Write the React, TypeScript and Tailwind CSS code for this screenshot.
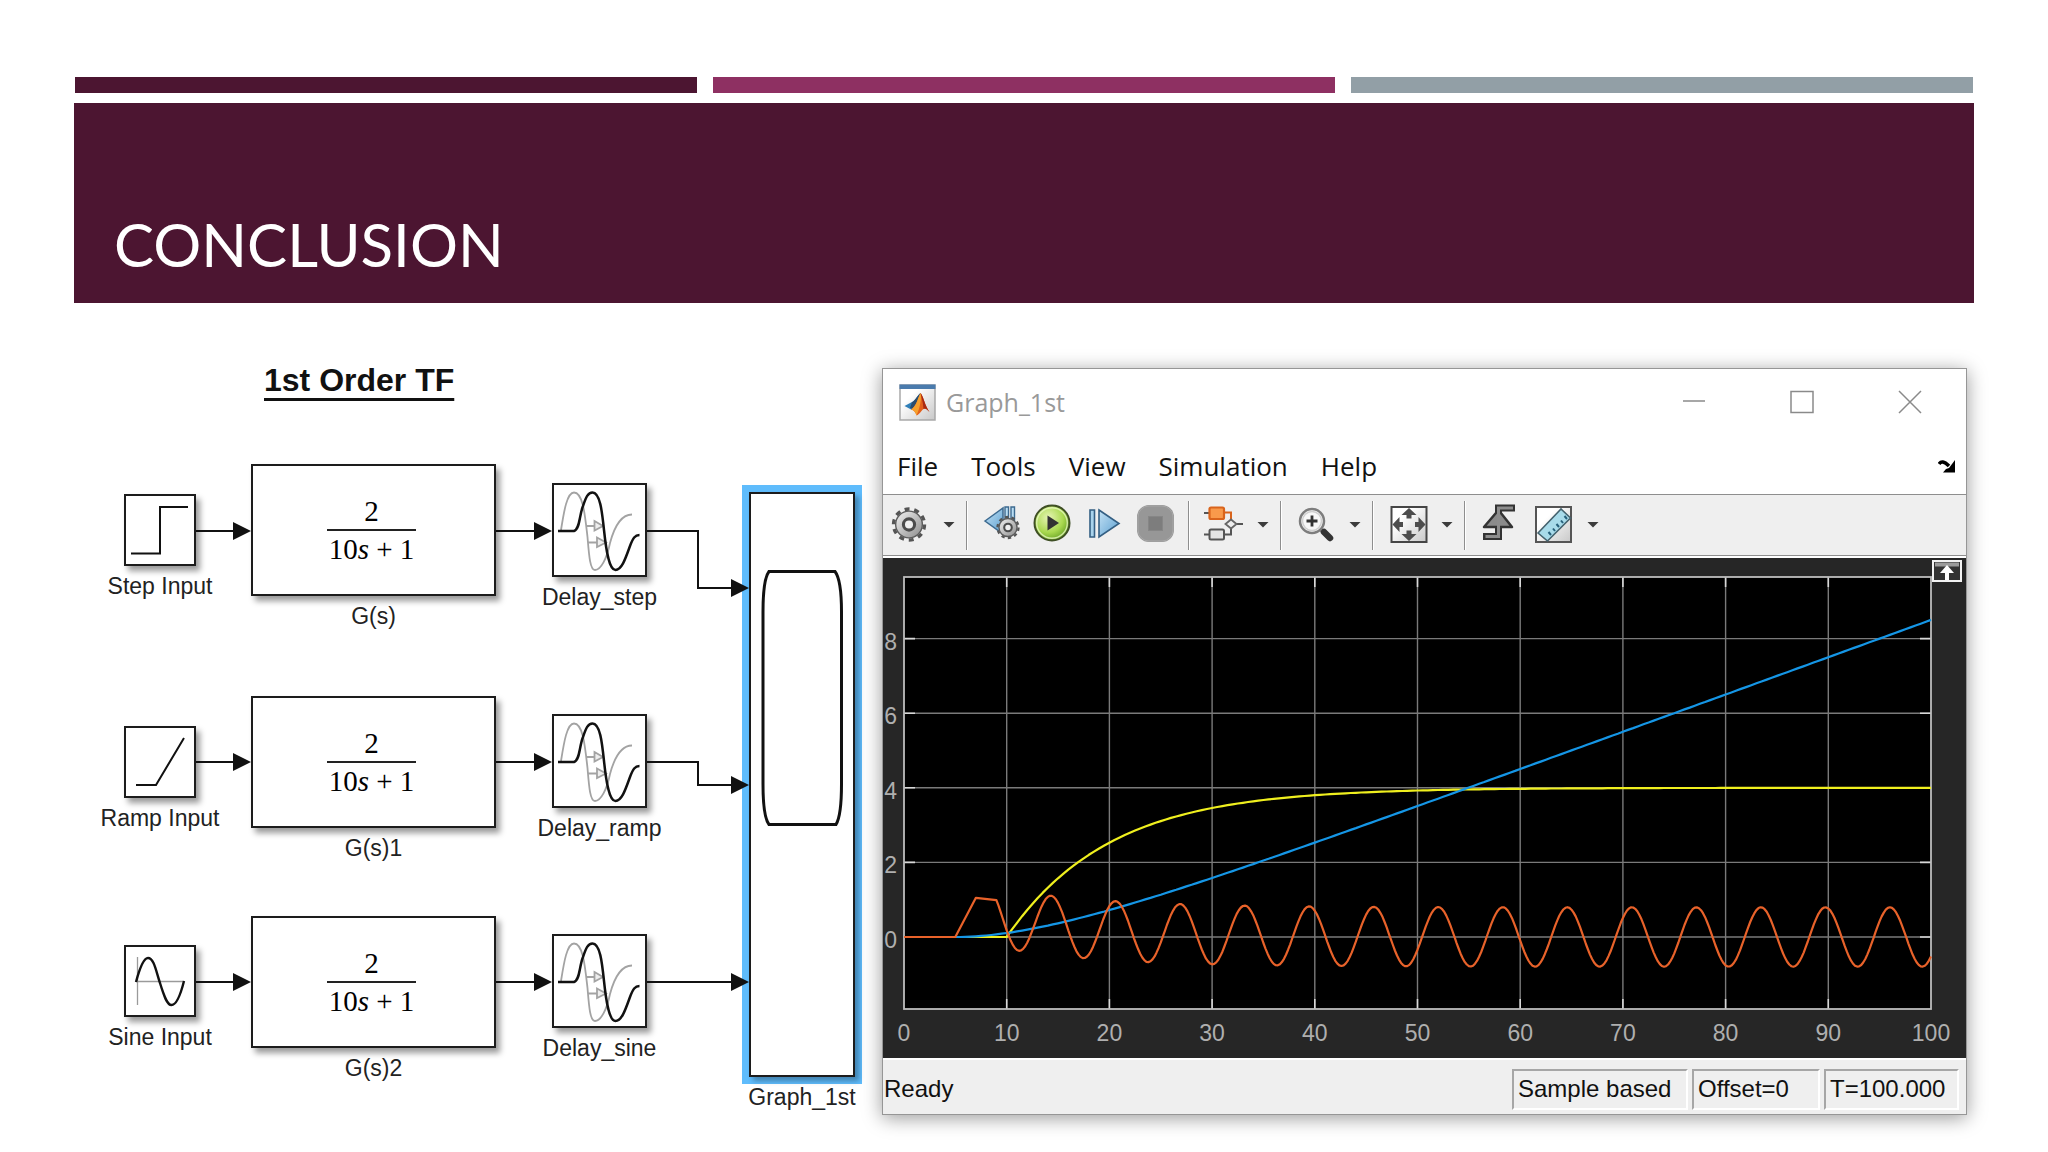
import React from "react";
import { clsx } from "clsx";

// 1. Interfaces
interface BlockProps {
  label: string;
  position: string;
  size: string;
  children?: React.ReactNode;
  selected?: boolean;
}

interface ChainRow {
  id: string;
  source: string;
  sourcePos: string;
  plant: string;
  plantPos: string;
  delay: string;
  delayPos: string;
  glyph: React.ReactNode;
}

// 2. Block glyphs
const StepGlyph = () => (
  <svg viewBox="0 0 72 72" className="absolute -inset-0.5" fill="none" stroke="#111" strokeWidth="2">
    <path d="M7 59.5H36V13H64" />
  </svg>
);

const RampGlyph = () => (
  <svg viewBox="0 0 72 72" className="absolute -inset-0.5" fill="none" stroke="#111" strokeWidth="2">
    <path d="M12 59H32L60 12" />
  </svg>
);

const SineGlyph = () => (
  <svg viewBox="0 0 72 72" className="absolute -inset-0.5" fill="none" strokeWidth="2.4">
    <path d="M13.5 12V60M12 36.5H60" stroke="#9a9a9a" strokeWidth="1.3" />
    <path d="M12 37C16 22 20 13 24 13C30 13 32 26 36 38C40 51 43 60 47.5 60C53 60 57 48 60 36" stroke="#111" />
  </svg>
);

const DelayGlyph = () => (
  <svg viewBox="0 0 95 94" className="absolute -inset-0.5" fill="none">
    <g stroke="#a3a3a3" strokeWidth="1.8">
      <path d="M9 47C12 28 15 9.500 22 9.500C31 9.500 33 32 35.500 54C37 72 38 87 43 87C49 87 55 75 58 60C62 45 68 31.500 80 31.500" />
      <path d="M34 43H42M42.500 38L51 43L42.500 47.500ZM36 59.500H45M45 54.500L54 59.500L45 64Z" fill="#eee" />
    </g>
    <path
      d="M6 48H22C28 46 27 33 31 23C34 14 36 9.500 40.500 9.500C48 9.500 50 28 52 47C54 66 57 87 63.500 87C70 87 74 74 78 63C81 55 83 52 87.500 52"
      stroke="#111"
      strokeWidth="2.5"
    />
  </svg>
);

const TransferFunction = () => (
  <div className="mr-1 flex flex-col items-center font-['Liberation_Serif',serif] text-[29px] leading-9 text-black">
    <span>2</span>
    <span className="border-t-2 border-[#222] px-0.5">
      10<i>s</i> + 1
    </span>
  </div>
);

// 3. Diagram block with its caption underneath
const Block: React.FC<BlockProps> = ({ label, position, size, children, selected = false }) => (
  <div className={clsx("absolute flex flex-col items-center", position, size)}>
    <div
      className={clsx(
        "relative flex w-full grow items-center justify-center border-2 border-[#1c1c1c] bg-white",
        selected
          ? "shadow-[4px_4px_5px_rgba(0,0,0,0.3),0_0_0_7px_#5fbcfc]"
          : "shadow-[4px_5px_6px_rgba(0,0,0,0.4)]"
      )}
    >
      {children}
    </div>
    <span className="mt-1.5 h-7 whitespace-nowrap text-[23px] leading-7 text-[#222]">{label}</span>
  </div>
);

const rows: ChainRow[] = [
  {
    id: "step",
    source: "Step Input",
    sourcePos: "left-[50px] top-[191px]",
    plant: "G(s)",
    plantPos: "left-[177px] top-[161px]",
    delay: "Delay_step",
    delayPos: "left-[478px] top-[180px]",
    glyph: <StepGlyph />,
  },
  {
    id: "ramp",
    source: "Ramp Input",
    sourcePos: "left-[50px] top-[423px]",
    plant: "G(s)1",
    plantPos: "left-[177px] top-[393px]",
    delay: "Delay_ramp",
    delayPos: "left-[478px] top-[411px]",
    glyph: <RampGlyph />,
  },
  {
    id: "sine",
    source: "Sine Input",
    sourcePos: "left-[50px] top-[642px]",
    plant: "G(s)2",
    plantPos: "left-[177px] top-[613px]",
    delay: "Delay_sine",
    delayPos: "left-[478px] top-[631px]",
    glyph: <SineGlyph />,
  },
];

// y of every chain and y of the scope port it ends in
const wires = [
  { y: 228, port: 285 },
  { y: 459, port: 482 },
  { y: 679, port: 679 },
];

const arrow = (x: number, y: number) => `M${x} ${y}L${x - 18} ${y - 9}V${y + 9}Z`;

const Diagram = () => (
  <section className="relative h-[820px] w-[808px] shrink-0" aria-label="1st order block diagram">
    <h2 className="absolute left-[190px] top-[57px] whitespace-nowrap text-[32px] font-bold leading-10 text-[#111] underline decoration-[3px] underline-offset-[7px]">
      1st Order TF
    </h2>

    {rows.map((row) => (
      <React.Fragment key={row.id}>
        <Block label={row.source} position={row.sourcePos} size="w-[72px] h-[106px]">
          {row.glyph}
        </Block>
        <Block label={row.plant} position={row.plantPos} size="w-[245px] h-[166px]">
          <TransferFunction />
        </Block>
        <Block label={row.delay} position={row.delayPos} size="w-[95px] h-[128px]">
          <DelayGlyph />
        </Block>
      </React.Fragment>
    ))}

    <Block label="Graph_1st" position="left-[675px] top-[189px]" size="w-[106px] h-[619px]" selected>
      <svg viewBox="0 0 106 585" className="absolute -inset-0.5" fill="none" stroke="#111" strokeWidth="3">
        <path d="M20 79.500H86C91 86 92.500 100 92.500 120V292C92.500 310 91 326 87 332.500H20C15 326 14 310 14 292V120C14 100 15 86 20 79.500Z" />
      </svg>
    </Block>

    <svg viewBox="0 0 808 820" className="pointer-events-none absolute inset-0" fill="none" stroke="#111" strokeWidth="2">
      {wires.map(({ y, port }) => (
        <g key={y}>
          <path d={`M122 ${y}H165M422 ${y}H466M573 ${y}H624V${port}H663`} />
          <path d={arrow(177, y) + arrow(478, y) + arrow(675, port)} fill="#111" stroke="none" />
        </g>
      ))}
    </svg>
  </section>
);

// 4. Toolbar icons
const Icon: React.FC<{ children: React.ReactNode }> = ({ children }) => (
  <svg viewBox="0 0 38 38" className="size-[38px] overflow-visible" fill="none">
    {children}
  </svg>
);

const Gear: React.FC<{ cx: number; cy: number; r: number }> = ({ cx, cy, r }) => (
  <g>
    <circle cx={cx} cy={cy} r={r} stroke="#555" strokeWidth={r * 0.22} strokeDasharray={`${r * 0.32} ${r * 0.308}`} />
    <circle cx={cx} cy={cy} r={r * 0.86} fill="url(#metal)" stroke="#5c5c5c" strokeWidth="1.4" />
    <circle cx={cx} cy={cy} r={r * 0.36} stroke="#4c4c4c" strokeWidth={r * 0.2} fill="#efefef" />
  </g>
);

const GearIcon = () => (
  <Icon>
    <Gear cx={18} cy={18.5} r={15.5} />
  </Icon>
);

const StepBackIcon = () => (
  <Icon>
    <path d="M2 15L20 2V28Z" fill="url(#sky)" stroke="#3c6a90" strokeWidth="1.5" />
    <path d="M22 1H25.500V15H22ZM28 1H31.500V15H28Z" fill="#b9ddf3" stroke="#3c6a90" strokeWidth="1.4" />
    <Gear cx={25} cy={21.5} r={10.5} />
  </Icon>
);

const PlayIcon = () => (
  <Icon>
    <circle cx="18" cy="17" r="17.5" fill="url(#lime)" stroke="#3f4f25" strokeWidth="2" />
    <circle cx="18" cy="17" r="15.3" stroke="#e7f7c0" strokeWidth="1.4" opacity="0.8" />
    <path d="M13.500 9.500L25 17L13.500 24.500Z" fill="#333" />
  </Icon>
);

const StepForwardIcon = () => (
  <Icon>
    <path d="M5 4H9.500V31H5Z" fill="#a9d3ec" stroke="#345f83" strokeWidth="1.6" />
    <path d="M14 4L34 17.500L14 31Z" fill="url(#sky)" stroke="#345f83" strokeWidth="1.6" />
  </Icon>
);

const StopIcon = () => (
  <Icon>
    <rect x="1" y="-1" width="37" height="37" rx="12" fill="#979797" />
    <rect x="2" y="0" width="35" height="35" rx="11" stroke="#a8a8a8" />
    <rect x="12.5" y="10.5" width="14" height="14" fill="#7d7d7d" stroke="#868686" />
  </Icon>
);

const BlocksIcon = () => (
  <Icon>
    <path d="M20 6.500H26V15" stroke="#d9641c" strokeWidth="2" />
    <path d="M-1 7H5M-1 28.500H6M20 28.500H26V22M31 18H38" stroke="#555" strokeWidth="2" />
    <rect x="4.5" y="1.5" width="14.500" height="11.500" rx="1.500" fill="#f99a4b" stroke="#d9641c" strokeWidth="2.200" />
    <rect x="4.5" y="23.5" width="14.500" height="10" rx="1.500" fill="#e4e4e4" stroke="#555" strokeWidth="2" />
    <path d="M20.500 18L26 13.500L31.500 18L26 22.500Z" fill="#eee" stroke="#666" strokeWidth="1.800" />
  </Icon>
);

const ZoomIcon = () => (
  <Icon>
    <path d="M23 23L27 26" stroke="#777" strokeWidth="4" />
    <path d="M27 26L33 32" stroke="#333" strokeWidth="6.500" strokeLinecap="round" />
    <circle cx="15" cy="15" r="12" fill="#f7f7f7" stroke="#7d7d7d" strokeWidth="2.500" />
    <circle cx="15" cy="15" r="9.500" stroke="#d0d0d0" strokeWidth="1.500" />
    <path d="M9.500 15H20.500M15 9.500V20.500" stroke="#333" strokeWidth="2.800" />
  </Icon>
);

const FitIcon = () => (
  <Icon>
    <rect x="2.5" y="1" width="35" height="35" fill="url(#paper)" stroke="#454545" strokeWidth="2" />
    <path
      d="M20 2L27.500 9H22.500V12.500H17.500V9H12.500ZM20 35L27.500 28H22.500V24.500H17.500V28H12.500ZM3.500 18.500L10.500 11V16H14V21H10.500V26ZM36.500 18.500L29.500 11V16H26V21H29.500V26Z"
      fill="#4d4d4d"
    />
  </Icon>
);

const TriggerIcon = () => (
  <Icon>
    <path d="M2 30.500H17.500V2H34" stroke="#333" strokeWidth="7" />
    <path d="M17.500 4L31 21H3Z" fill="#8b8b8b" stroke="#333" strokeWidth="2.500" strokeLinejoin="round" />
    <path d="M4.500 30.500H17.500V2H32" stroke="#8d8d8d" strokeWidth="3" />
  </Icon>
);

const RulerIcon = () => (
  <Icon>
    <rect x="1" y="1" width="35" height="35" fill="url(#paper)" stroke="#555" strokeWidth="2" />
    <path d="M3 27L26 3L35.500 12L12.500 35Z" fill="#a8dbea" stroke="#44626e" strokeWidth="1.600" />
    <path d="M16 29L13.500 26M20 25L18 22.500M24 21L21.500 18M28 17L26 14.500M32 13L29.500 10" stroke="#27617c" strokeWidth="2" />
  </Icon>
);

const ToolButton: React.FC<{ label: string; children: React.ReactNode }> = ({ label, children }) => (
  <button type="button" aria-label={label} className="size-[38px] shrink-0">
    {children}
  </button>
);

const Caret: React.FC<{ label: string }> = ({ label }) => (
  <button type="button" aria-label={label} className="ml-2.5 mr-[7px] flex h-[38px] w-5 shrink-0 items-center justify-center">
    <svg viewBox="0 0 12 6" className="h-1.5 w-3">
      <path d="M0.500 0H11.500L6 5.500Z" fill="#3c3c3c" />
    </svg>
  </button>
);

const Divider = () => <span className="mr-[15px] h-[49px] w-0.5 shrink-0 border-l border-[#8e8e8e] bg-white" />;

const MatlabIcon = () => (
  <svg viewBox="0 0 37 37" className="size-[37px] shrink-0">
    <rect x="1" y="1" width="35" height="35" fill="url(#paper)" stroke="#a9a9a9" strokeWidth="1.500" />
    <rect x="0.500" y="0.500" width="36" height="4.500" fill="#4a7bad" />
    <path d="M5.500 22L13 18C15 18 18 12 21.500 9L18 20L13 26Z" fill="#2f7fb8" />
    <path d="M13 18C15 18 18 12 21.500 9L15 25L11 24Z" fill="#2b4d6e" />
    <path d="M21.500 9C24 11 26 22 30.500 28C27 24 25 24 22.500 27C20.500 29.500 19 31 17.500 31.500C16.500 28 15 26 12 25.500C17 23 19 14 21.500 9Z" fill="#e2601c" />
    <path d="M21.500 9C23 13 21 24 17.500 31.500C16.500 28 15 26 12 25.500C17 23 19 14 21.500 9Z" fill="#f6a02c" />
    <path d="M21.500 9C24 11 26 22 30.500 28C27 24 25.500 24 24.500 25C24 18 22.500 13 21.500 9Z" fill="#a82a14" />
  </svg>
);

// 5. Scope plot
const X0 = 21;
const Y0 = 379;
const px = (t: number) => X0 + t * 10.27;
const py = (v: number) => Y0 - v * 37.3;

const trace = (times: number[], f: (t: number) => number) =>
  times.map((t) => `${px(t).toFixed(1)},${py(f(t)).toFixed(1)}`).join(" ");

const range = (from: number, to: number, step: number) =>
  Array.from({ length: Math.round((to - from) / step) + 1 }, (_, i) => from + i * step);

const stepResponse = (t: number) => (t < 10 ? 0 : 4 * (1 - Math.exp(-(t - 10) / 10)));
const rampResponse = (t: number) => (t < 5 ? 0 : 0.1 * (t - 5 - 10 * (1 - Math.exp(-(t - 5) / 10))));
const sineResponse = (t: number) => {
  const u = t - 5;
  return u < 0 ? 0 : (8 / 101) * (Math.sin(u) - 10 * Math.cos(u) + 10 * Math.exp(-u / 10));
};

const xTicks = range(0, 100, 10);
const yTicks = range(0, 8, 2);

const Plot = () => (
  <svg viewBox="0 0 1083 500" className="block w-full border-t-2 border-white bg-[#262626]" role="img" aria-label="Scope traces">
    <rect x={X0} y="19" width="1027" height="432" fill="#000" />
    <g stroke="#7a7a7a" strokeWidth="1.400">
      {xTicks.slice(1, -1).map((t) => (
        <path key={t} d={`M${px(t)} 19V451`} />
      ))}
      {yTicks.map((v) => (
        <path key={v} d={`M${X0} ${py(v)}H1048`} />
      ))}
    </g>
    <g stroke="#d8d8d8" strokeWidth="1.600">
      {xTicks.slice(1, -1).map((t) => (
        <path key={t} d={`M${px(t)} 19V29M${px(t)} 441V451`} />
      ))}
      {yTicks.map((v) => (
        <path key={v} d={`M${X0} ${py(v)}H32M1037 ${py(v)}H1048`} />
      ))}
    </g>
    <rect x={X0} y="19" width="1027" height="432" fill="none" stroke="#bdbdbd" strokeWidth="1.800" />
    <g fill="none" strokeWidth="2.200" strokeLinejoin="round">
      <polyline points={trace(range(0, 100, 0.5), stepResponse)} stroke="#efef1e" />
      <polyline points={trace(range(0, 100, 0.5), rampResponse)} stroke="#1596e6" />
      <polyline points={trace([0, 5, 7, ...range(9, 100, 0.2)], sineResponse)} stroke="#e8622a" />
    </g>
    <g fill="#afafaf" fontFamily="'Liberation Sans', sans-serif" fontSize="23">
      {xTicks.map((t) => (
        <text key={t} x={px(t)} y="483" textAnchor="middle">
          {t}
        </text>
      ))}
      {yTicks.map((v) => (
        <text key={v} x="14" y={py(v) + 11} textAnchor="end">
          {v}
        </text>
      ))}
    </g>
    {/* Maximize axes */}
    <g>
      <rect x="1050" y="3" width="28" height="20" fill="#333" stroke="#f2f2f2" strokeWidth="2" />
      <path d="M1052 6.500H1076" stroke="#9a9a9a" strokeWidth="4" />
      <path d="M1064 7L1071 15H1066V22H1062V15H1057Z" fill="#fff" />
    </g>
  </svg>
);

// 6. Scope window
const menus = ["File", "Tools", "View", "Simulation", "Help"];

const StatusCell: React.FC<{ width: string; children: React.ReactNode }> = ({ width, children }) => (
  <span className={clsx("h-[41px] border-2 border-b-white border-l-[#a6a6a6] border-r-white border-t-[#a6a6a6] pl-1 leading-9", width)}>
    {children}
  </span>
);

const ScopeWindow = () => (
  <section className="mr-[7px] mt-[65px] min-w-0 flex-1 self-start border border-[#969696] bg-white shadow-[0_3px_18px_rgba(0,0,0,0.4)]">
    <header className="flex h-[66px] items-center pl-4 pr-11 font-['Open_Sans',sans-serif]">
      <MatlabIcon />
      <h3 className="ml-2.5 text-[25px] leading-9 text-[#999]">Graph_1st</h3>
      <div className="ml-auto flex gap-[84px]">
        <button type="button" aria-label="Minimize">
          <svg viewBox="0 0 24 24" className="size-6" stroke="#8a8a8a" strokeWidth="1.500">
            <path d="M1 11H23" />
          </svg>
        </button>
        <button type="button" aria-label="Maximize">
          <svg viewBox="0 0 24 24" className="size-6" fill="none" stroke="#8a8a8a" strokeWidth="1.500">
            <rect x="1" y="1.500" width="22" height="21" />
          </svg>
        </button>
        <button type="button" aria-label="Close">
          <svg viewBox="0 0 24 24" className="size-6" stroke="#8a8a8a" strokeWidth="1.500">
            <path d="M1 1L23 23M23 1L1 23" />
          </svg>
        </button>
      </div>
    </header>

    <nav className="flex h-[59px] items-center gap-[33px] pl-3.5 pr-2.5 pt-0.5 font-['Open_Sans',sans-serif] text-[26px] leading-9 text-[#111]">
      {menus.map((menu) => (
        <button key={menu} type="button">
          {menu}
        </button>
      ))}
      <button type="button" aria-label="Dock window" className="ml-auto">
        <svg viewBox="0 0 18 14" className="h-3.5 w-[18px]">
          <path d="M1 5C3 2 6 2 11 7" fill="none" stroke="#000" strokeWidth="3.500" />
          <path d="M17 1V13.500H5L8 10L11 9L14 5Z" fill="#000" />
        </svg>
      </button>
    </nav>

    <div className="flex h-[62px] items-center border-y border-[#8e8e8e] bg-[#efefef] pl-2">
      <ToolButton label="Configuration properties"><GearIcon /></ToolButton>
      <Caret label="Configuration options" />
      <Divider />
      <div className="mr-3.5 flex gap-[13px]">
        <ToolButton label="Step back options"><StepBackIcon /></ToolButton>
        <ToolButton label="Run"><PlayIcon /></ToolButton>
        <ToolButton label="Step forward"><StepForwardIcon /></ToolButton>
        <ToolButton label="Stop"><StopIcon /></ToolButton>
      </div>
      <Divider />
      <ToolButton label="Highlight block"><BlocksIcon /></ToolButton>
      <Caret label="Highlight options" />
      <Divider />
      <ToolButton label="Zoom in"><ZoomIcon /></ToolButton>
      <Caret label="Zoom options" />
      <Divider />
      <ToolButton label="Scale axes"><FitIcon /></ToolButton>
      <Caret label="Scale options" />
      <Divider />
      <div className="flex gap-4">
        <ToolButton label="Triggers"><TriggerIcon /></ToolButton>
        <ToolButton label="Cursor measurements"><RulerIcon /></ToolButton>
      </div>
      <Caret label="Measurement options" />
    </div>

    <Plot />

    <footer className="flex h-14 items-center border-t-2 border-white bg-[#efefef] pl-px pr-[7px] pt-1 text-[24px] text-[#111]">
      <span className="mr-auto">Ready</span>
      <div className="flex gap-1 whitespace-nowrap">
        <StatusCell width="w-[176px]">Sample based</StatusCell>
        <StatusCell width="w-[128px]">Offset=0</StatusCell>
        <StatusCell width="w-[135px]">T=100.000</StatusCell>
      </div>
    </footer>
  </section>
);

// Shared gradients
const Gradients = () => (
  <svg className="absolute size-0" aria-hidden="true">
    <defs>
      <linearGradient id="metal" x1="0" y1="0" x2="1" y2="1">
        <stop offset="0" stopColor="#f2f2f2" />
        <stop offset="1" stopColor="#8c8c8c" />
      </linearGradient>
      <linearGradient id="sky" x1="0" y1="0" x2="1" y2="1">
        <stop offset="0" stopColor="#c4e2f5" />
        <stop offset="1" stopColor="#5b9fd0" />
      </linearGradient>
      <radialGradient id="lime" cx="0.4" cy="0.35" r="0.7">
        <stop offset="0" stopColor="#e6f5b4" />
        <stop offset="0.6" stopColor="#a9d94f" />
        <stop offset="1" stopColor="#5f9a1e" />
      </radialGradient>
      <linearGradient id="paper" x1="0" y1="0" x2="1" y2="1">
        <stop offset="0.3" stopColor="#ffffff" />
        <stop offset="1" stopColor="#c8c8c8" />
      </linearGradient>
    </defs>
  </svg>
);

// 7. Slide
export default function App() {
  return (
    <main className="min-h-screen bg-white px-[74px] pt-[77px] font-['Liberation_Sans',sans-serif]">
      <Gradients />
      <div className="mx-px grid grid-cols-3 gap-4">
        <span className="h-4 bg-[#4c1531]" />
        <span className="h-4 bg-[#8e3062]" />
        <span className="h-4 bg-[#929fa6]" />
      </div>

      <header className="mt-2.5 flex h-[200px] items-end bg-[#4c1531] pb-[27px] pl-10">
        <h1 className="font-[Lato,sans-serif] text-[60px] leading-[64px] text-white">CONCLUSION</h1>
      </header>

      <div className="flex">
        <Diagram />
        <ScopeWindow />
      </div>
    </main>
  );
}
